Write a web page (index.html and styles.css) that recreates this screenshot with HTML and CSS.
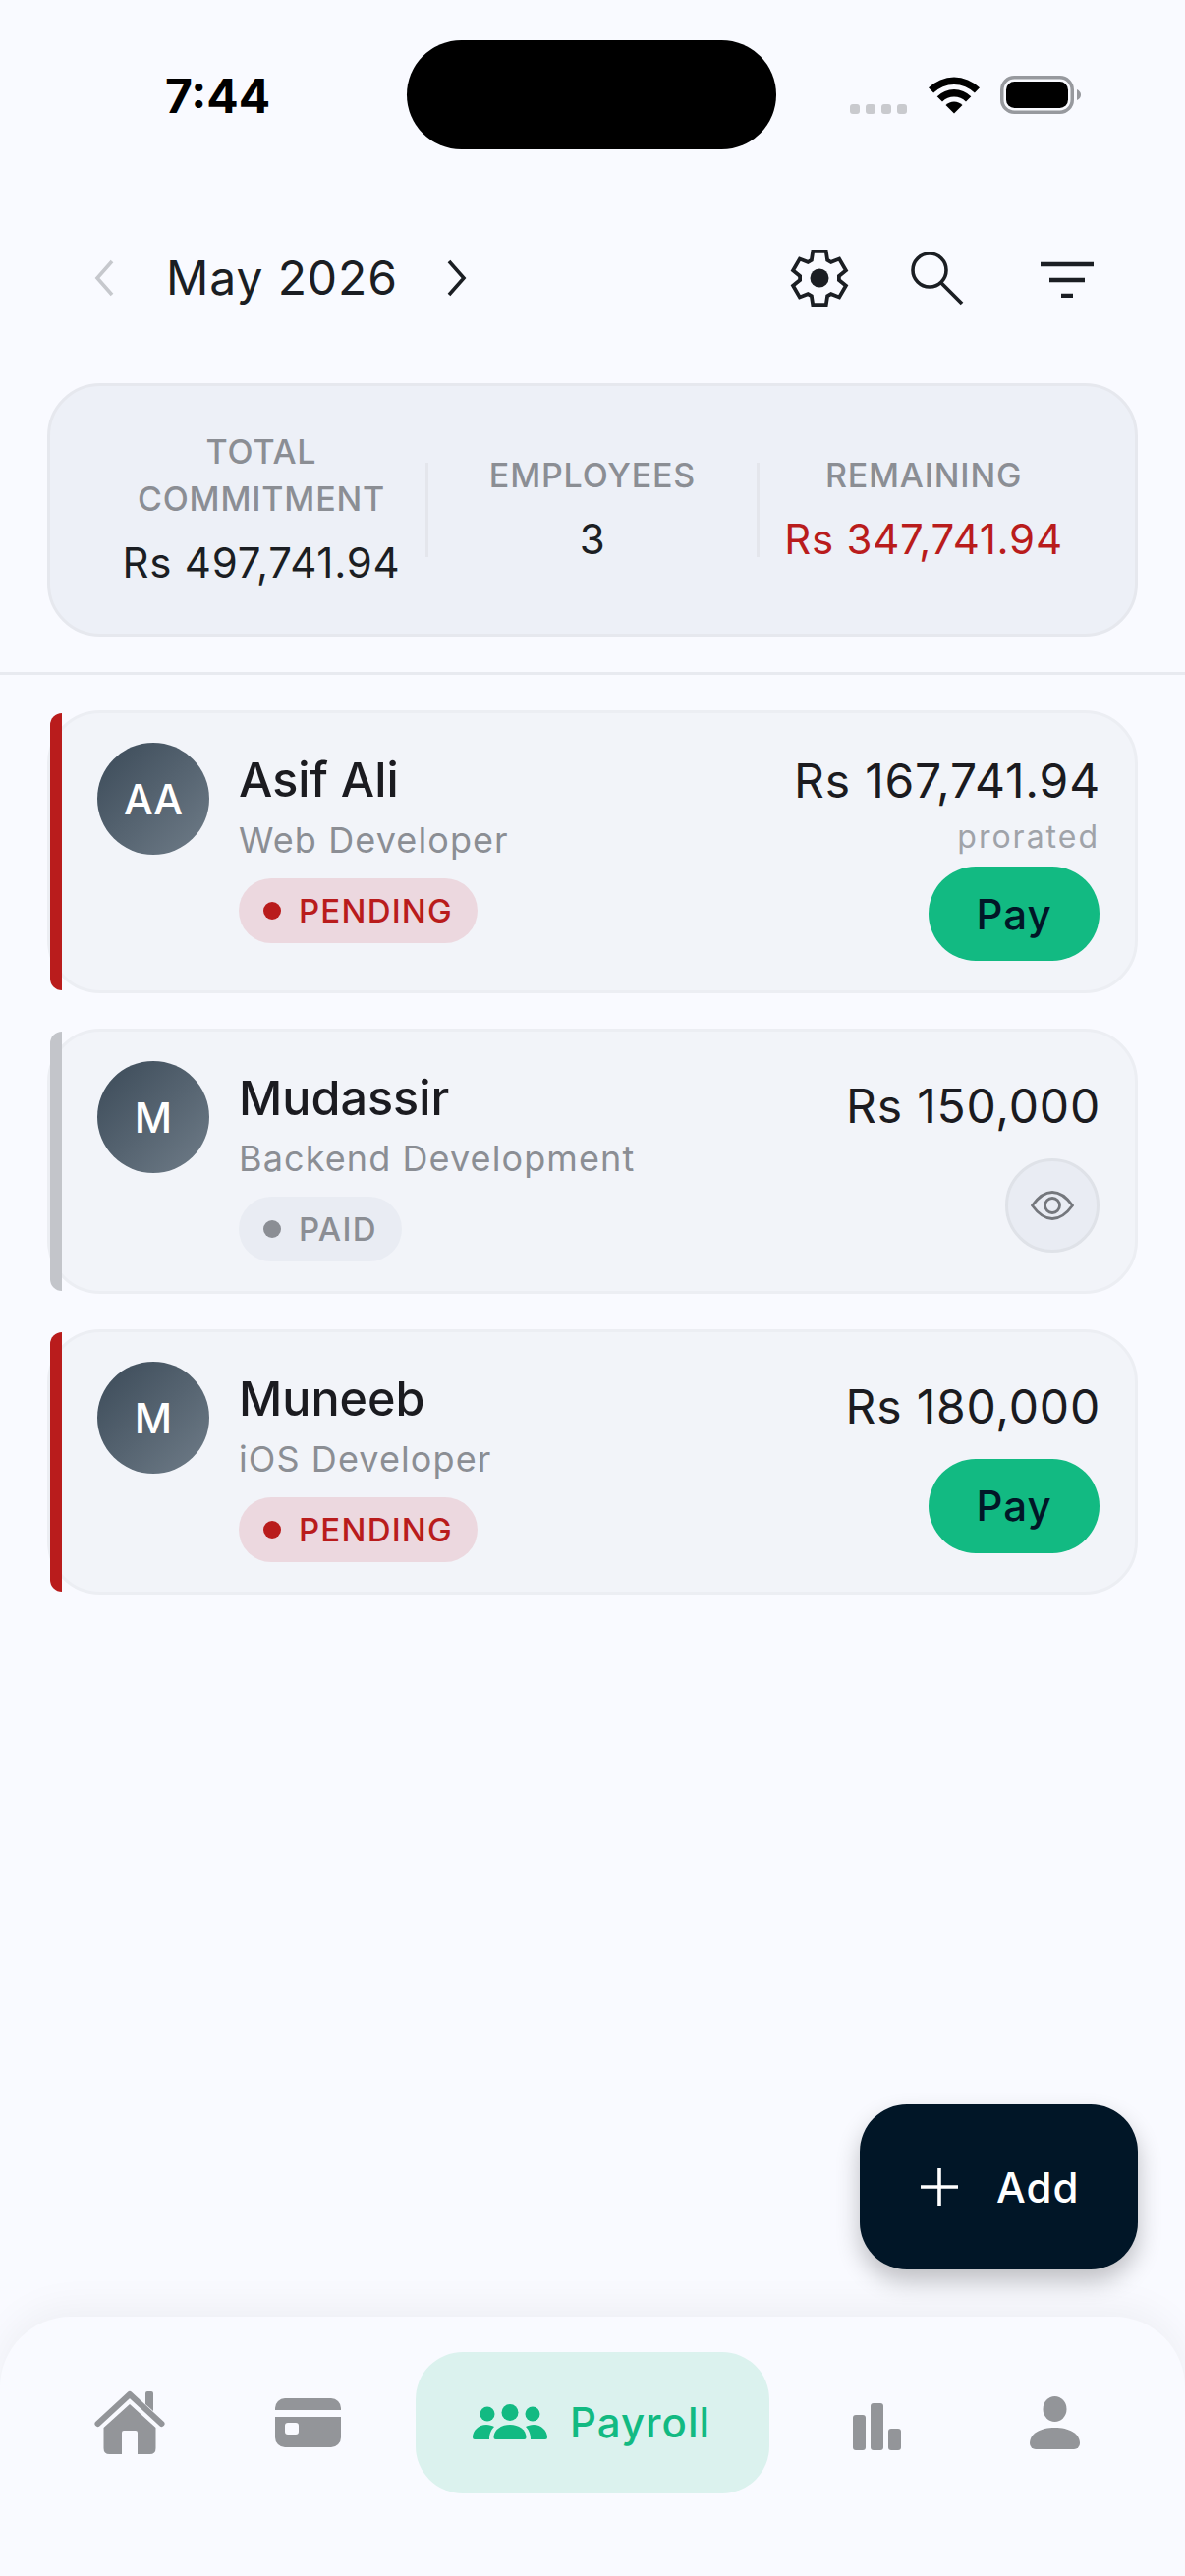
FILE: index.html
```html
<!DOCTYPE html>
<html lang="en">
<head>
<meta charset="utf-8">
<title>Payroll</title>
<link rel="stylesheet" href="styles.css">
</head>
<body>
<div class="phone">
  <div class="status">
    <span class="time">7:44</span>
    <div class="island"></div>
    <div class="dots"><i></i><i></i><i></i><i></i></div>
    <svg class="wifi" width="52" height="38" viewBox="0 0 52 38"><path d="M0 11.3A37 37 0 0 1 52 11.3L46.9 16.6A29.5 29.5 0 0 0 5.1 16.6Z"/><path d="M8.7 20.2A24.5 24.5 0 0 1 43.3 20.2L38 25.5A17 17 0 0 0 14 25.5Z"/><path d="M17.5 29A12 12 0 0 1 34.5 29L26 37.5Z"/></svg>
    <svg class="battery" width="83" height="39" viewBox="0 0 83 39"><rect x="1.75" y="1.75" width="71.5" height="35.5" rx="12.5" fill="none" stroke="#97999e" stroke-width="3.5"/><rect x="6" y="6" width="63" height="27" rx="8.5"/><path d="M78 14 Q82 16 82 19.5 Q82 23 78 25Z" fill="#97999e"/></svg>
  </div>

  <header class="top">
    <svg class="chev" width="20" height="38" viewBox="0 0 20 38"><path d="M18 2 3 19l15 17" fill="none" stroke="#c6c8cd" stroke-width="3.6"/></svg>
    <h1 class="month">May 2026</h1>
    <svg class="chev next" width="20" height="38" viewBox="0 0 20 38"><path d="M2 2l15 17L2 36" fill="none" stroke="#1b1e23" stroke-width="3.6"/></svg>
    <svg class="gear" width="60" height="60" viewBox="0 0 60 60"><path d="M21.87 11.73 23.23 2.83H36.77L38.13 11.73 41.76 13.82 50.14 10.55 56.92 22.28 49.89 27.91V32.09L56.92 37.72 50.14 49.45 41.76 46.18 38.13 48.27 36.77 57.17H23.23L21.87 48.27 18.24 46.18 9.86 49.45 3.08 37.72 10.11 32.09V27.91L3.08 22.28 9.86 10.55 18.24 13.82Z" fill="none" stroke="#1b1e23" stroke-width="3.8"/><circle cx="30" cy="30" r="9.5" fill="#1b1e23"/></svg>
    <svg class="search" width="56" height="60" viewBox="0 0 56 60"><circle cx="20" cy="22" r="17" fill="none" stroke="#1b1e23" stroke-width="3.6"/><path d="M32 35 53 56" stroke="#1b1e23" stroke-width="3.8"/></svg>
    <svg class="filter" width="54" height="40" viewBox="0 0 54 40"><path d="M0 6H54M9 22H45M21 38H33" stroke="#1b1e23" stroke-width="4.5"/></svg>
  </header>

  <section class="summary">
    <div class="stat">
      <div class="stat-label">TOTAL COMMITMENT</div>
      <div class="stat-value">Rs 497,741.94</div>
    </div>
    <div class="vline"></div>
    <div class="stat">
      <div class="stat-label">EMPLOYEES</div>
      <div class="stat-value">3</div>
    </div>
    <div class="vline"></div>
    <div class="stat">
      <div class="stat-label">REMAINING</div>
      <div class="stat-value red">Rs 347,741.94</div>
    </div>
  </section>
  <div class="rule"></div>

  <main class="list">
    <article class="card">
      <span class="stripe stripe-red"></span>
      <div class="avatar">AA</div>
      <div class="info">
        <div class="name">Asif Ali</div>
        <div class="role">Web Developer</div>
        <span class="badge badge-pending"><i></i>PENDING</span>
      </div>
      <div class="pay-col">
        <div class="amount">Rs 167,741.94</div>
        <div class="note">prorated</div>
        <button class="pay">Pay</button>
      </div>
    </article>

    <article class="card">
      <span class="stripe stripe-grey"></span>
      <div class="avatar">M</div>
      <div class="info">
        <div class="name">Mudassir</div>
        <div class="role">Backend Development</div>
        <span class="badge badge-paid"><i></i>PAID</span>
      </div>
      <div class="pay-col">
        <div class="amount">Rs 150,000</div>
        <button class="view"><svg width="44" height="30" viewBox="0 0 44 30"><path d="M1.500 15C8 6 14 1.500 22 1.500S36 6 42.500 15C36 24 30 28.500 22 28.500S8 24 1.500 15Z" fill="none" stroke="#74777c" stroke-width="2.8"/><circle cx="22" cy="15" r="7.500" fill="none" stroke="#74777c" stroke-width="2.8"/></svg></button>
      </div>
    </article>

    <article class="card">
      <span class="stripe stripe-red"></span>
      <div class="avatar">M</div>
      <div class="info">
        <div class="name">Muneeb</div>
        <div class="role">iOS Developer</div>
        <span class="badge badge-pending"><i></i>PENDING</span>
      </div>
      <div class="pay-col">
        <div class="amount">Rs 180,000</div>
        <button class="pay">Pay</button>
      </div>
    </article>
  </main>

  <button class="fab">
    <svg width="40" height="40" viewBox="0 0 40 40"><path d="M20 1V39M1 20H39" stroke="#fff" stroke-width="3.6"/></svg>
    <span>Add</span>
  </button>

  <nav class="nav">
    <a class="nav-item">
      <svg width="72" height="66" viewBox="0 0 72 66"><path d="M3.5 34 36 4 68.500 34" fill="none" stroke="#939599" stroke-width="6" stroke-linecap="round" stroke-linejoin="round"/><path d="M52 14V3a2 2 0 0 1 2-2h4a2 2 0 0 1 2 2v18Z" fill="#939599"/><path d="M36 14 62.500 38V59Q62.500 65 56.500 65H44V43a2 2 0 0 0-2-2H30a2 2 0 0 0-2 2V65H15.500Q9.500 65 9.500 59V38Z" fill="#939599"/></svg>
    </a>
    <a class="nav-item">
      <svg width="67" height="50" viewBox="0 0 67 50"><path d="M0 12V10A10 10 0 0 1 10 0H57A10 10 0 0 1 67 10V12Z" fill="#939599"/><path fill-rule="evenodd" d="M0 19H67V40A10 10 0 0 1 57 50H10A10 10 0 0 1 0 40ZM13 25a3 3 0 0 0-3 3v6a3 3 0 0 0 3 3h8a3 3 0 0 0 3-3v-6a3 3 0 0 0-3-3Z" fill="#939599"/></svg>
    </a>
    <a class="nav-active">
      <svg width="76" height="38" viewBox="0 0 76 38" fill="#12ba82"><circle cx="38" cy="9.500" r="8.500"/><circle cx="15" cy="11" r="7.500"/><circle cx="61" cy="11" r="7.500"/><path d="M21.500 35C21.500 27 29 22 38 22S54.500 27 54.500 35a2 2 0 0 1-2 2H23.500a2 2 0 0 1-2-2Z"/><path d="M0 35C0 28 6 22 14 22 17 22 20 23 22 24 19 27 17 31 17 37H2a2 2 0 0 1-2-2Z"/><path d="M76 35C76 28 70 22 62 22 59 22 56 23 54 24 57 27 59 31 59 37H74a2 2 0 0 0 2-2Z"/></svg>
      <span>Payroll</span>
    </a>
    <a class="nav-item">
      <svg width="49" height="56" viewBox="0 0 49 56" fill="#939599"><rect x="0" y="20" width="13" height="36" rx="3"/><rect x="18" y="8" width="13" height="48" rx="3"/><rect x="36" y="34" width="13" height="22" rx="3"/></svg>
    </a>
    <a class="nav-item">
      <svg width="51" height="54" viewBox="0 0 51 54" fill="#939599"><ellipse cx="25.500" cy="13" rx="12" ry="13"/><path d="M0 48C0 38 11 32 25.500 32S51 38 51 48a6 6 0 0 1-6 6H6a6 6 0 0 1-6-6Z"/></svg>
    </a>
  </nav>
</div>
</body>
</html>
```

FILE: styles.css
```css
* { box-sizing: border-box; }
html, body { margin: 0; padding: 0; }
body { background: #f9faff; font-family: "Inter", "Liberation Sans", sans-serif; color: #1b1b20; }
.phone { position: relative; width: 1206px; height: 2622px; display: flex; flex-direction: column; overflow: hidden; background: #f9faff; }

.status { display: flex; align-items: center; height: 111px; margin-top: 41px; padding-left: 168px; }
.time { width: 107px; padding-top: 2px; font-size: 48px; font-weight: 700; color: #000; line-height: 1; white-space: nowrap; }
.island { width: 376px; height: 111px; border-radius: 56px; background: #000; margin-left: 139px; }
.dots { display: flex; gap: 6px; margin-left: 75px; margin-top: 29px; }
.dots i { width: 10px; height: 10px; border-radius: 3px; background: #c9cace; }
.wifi { margin-left: 22px; }
.battery { margin-left: 21px; }

.top { display: flex; align-items: center; height: 106px; margin-top: 78px; padding-left: 96px; }
.chev { flex: none; }
.month { margin: 0 0 0 53px; width: 236px; font-family: "Inter", sans-serif; font-size: 48px; font-weight: 400; letter-spacing: .9px; line-height: 1; white-space: nowrap; color: #1b1e23; }
.next { margin-left: 50px; }
.gear { margin-left: 329px; }
.search { margin-left: 62px; }
.filter { margin-left: 77px; }

.summary { display: flex; align-items: center; margin: 54px 48px 0; height: 258px; padding: 0 48px; background: #edf0f7; border: 3px solid #e6e8ee; border-radius: 54px; }
.stat { flex: 1; display: flex; flex-direction: column; align-items: center; text-align: center; }
.stat-label { width: 300px; padding-top: 1px; font-size: 34px; font-weight: 500; line-height: 48px; letter-spacing: .8px; color: #8b8e94; }
.stat-value { margin-top: 11px; font-size: 42px; font-weight: 400; line-height: 60px; letter-spacing: .75px; white-space: nowrap; color: #1b1e23; }
.stat-value.red { color: #b91c1c; }
.vline { width: 3px; height: 96px; background: #e4e6ec; flex: none; }
.rule { height: 3px; margin-top: 36px; background: #e8eaf0; }

.list { display: flex; flex-direction: column; gap: 36px; margin: 36px 48px 0; }
.card { position: relative; display: flex; align-items: center; padding: 30px 36px 30px 48px; background: #f2f4f9; border: 3px solid #eceef3; border-radius: 54px; }
.stripe { position: absolute; left: 0; top: 0; bottom: 0; width: 12px; border-radius: 12px 0 0 12px; }
.stripe-red { background: #b91c1c; }
.stripe-grey { background: #c3c5ca; }
.avatar { flex: none; align-self: flex-start; width: 114px; height: 114px; border-radius: 50%; display: flex; align-items: center; justify-content: center; background: linear-gradient(135deg, #3b4a58, #6f7c88); color: #fff; font-size: 42px; font-weight: 500; }
.info { flex: 1; align-self: flex-start; margin-left: 30px; padding-top: 2px; display: flex; flex-direction: column; align-items: flex-start; }
.name { font-size: 48.500px; line-height: 72px; font-weight: 500; color: #1b1b20; }
.role { margin-top: 1px; font-size: 36px; line-height: 48px; letter-spacing: 1.100px; color: #8b8e94; }
.badge { margin-top: 15px; height: 66px; display: inline-flex; align-items: center; gap: 18px; padding: 0 25px; border-radius: 33px; font-size: 33px; font-weight: 500; letter-spacing: 1.200px; }
.badge i { width: 18px; height: 18px; border-radius: 50%; background: currentColor; }
.badge-pending { background: #ecd8df; color: #b91c1c; }
.badge-paid { background: #e9ecf3; color: #8b8e94; }

.pay-col { display: flex; flex-direction: column; align-items: flex-end; }
.amount { font-size: 48px; font-weight: 400; line-height: 72px; letter-spacing: .8px; margin: 0 -1px 17px 0; white-space: nowrap; color: #1b1b20; }
.amount:has(+ .note) { margin-top: 3px; margin-bottom: 14px; }
.note { margin: -12px 0 12px; font-size: 32px; line-height: 37px; letter-spacing: 2px; color: #a0a3a9; }
.pay { width: 174px; height: 96px; border: 0; padding: 0; border-radius: 48px; background: #12ba82; color: #011627; font-family: inherit; font-size: 42px; font-weight: 500; letter-spacing: 1px; }
.view { width: 96px; height: 96px; padding: 0; border: 3px solid #dfe2e8; border-radius: 50%; background: #e9ecf3; display: flex; align-items: center; justify-content: center; }

.fab { position: absolute; right: 48px; bottom: 312px; width: 283px; height: 168px; display: flex; align-items: center; gap: 38px; padding: 0 0 0 61px; border: 0; border-radius: 48px; background: #011627; color: #fff; font-family: inherit; font-size: 42px; font-weight: 500; letter-spacing: 1px; box-shadow: 0 12px 24px rgba(0, 0, 0, .24); }
.fab svg { flex: none; }

.nav { margin-top: auto; height: 264px; display: grid; grid-template-columns: 264px 98px 482px 96px 266px; align-items: start; padding-top: 36px; background: #f9faff; border-radius: 72px 72px 0 0; box-shadow: 0 -8px 40px rgba(0, 0, 0, .05); }
.nav-item { height: 144px; display: flex; align-items: center; justify-content: center; }
.nav-active { justify-self: center; width: 360px; height: 144px; padding: 0 2px 2px 0; display: flex; align-items: center; justify-content: center; gap: 23px; background: #dbf2ee; border-radius: 48px; color: #12ba82; font-size: 42px; font-weight: 500; letter-spacing: 1px; }
.nav-active svg { flex: none; }
```
